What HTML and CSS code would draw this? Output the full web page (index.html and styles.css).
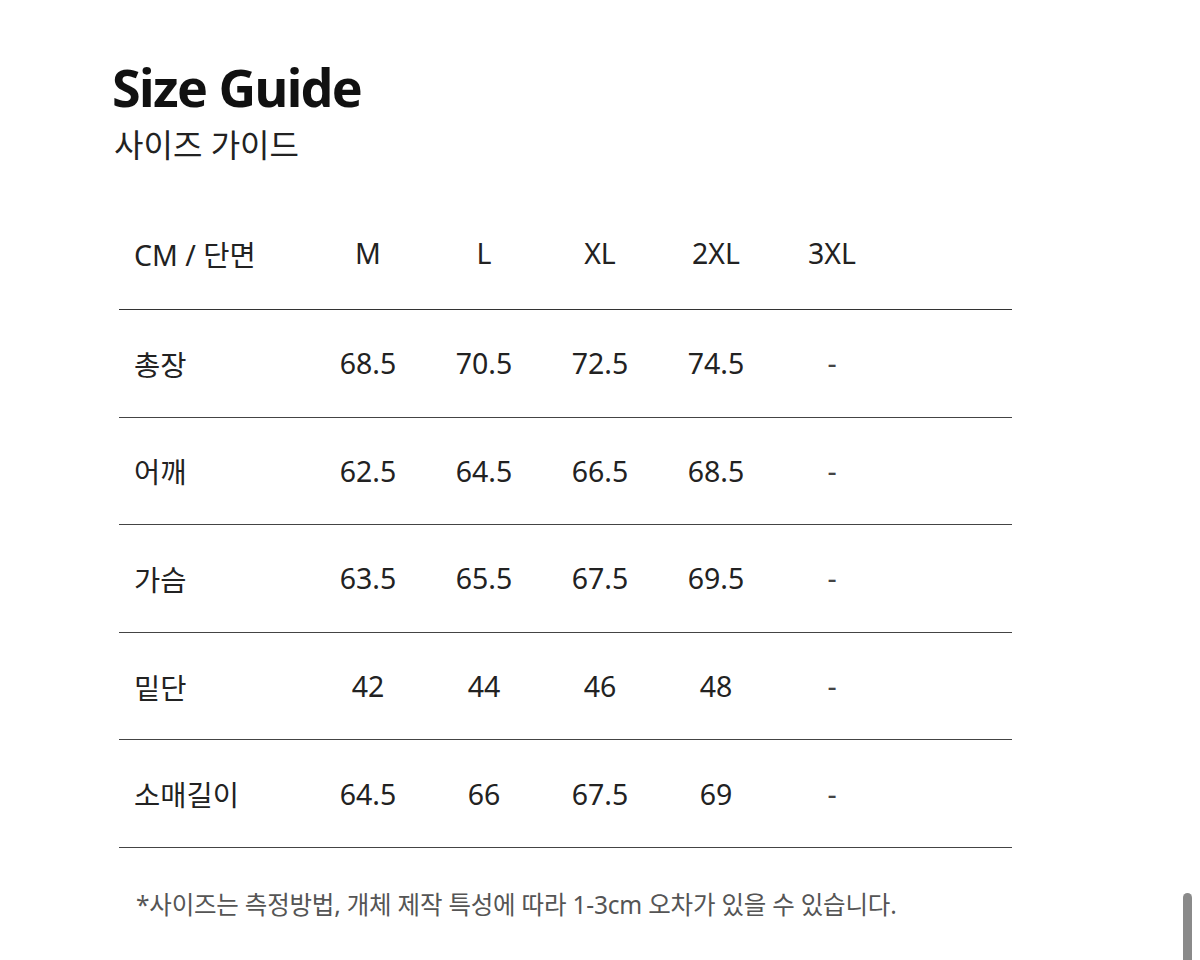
FILE: index.html
```html
<!DOCTYPE html>
<html lang="ko">
<head>
<meta charset="utf-8">
<title>Size Guide</title>
<link rel="stylesheet" href="styles.css">
</head>
<body>
<main class="page">
  <header class="heading">
    <h1 class="title">Size Guide</h1>
    <p class="subtitle">사이즈 가이드</p>
  </header>
  <table class="size-table">
    <colgroup>
      <col class="col-label">
      <col class="col-size"><col class="col-size"><col class="col-size"><col class="col-size"><col class="col-size">
      <col>
    </colgroup>
    <thead>
      <tr><th class="label">CM / 단면</th><th>M</th><th>L</th><th>XL</th><th>2XL</th><th>3XL</th><th></th></tr>
    </thead>
    <tbody>
      <tr><td class="label">총장</td><td>68.5</td><td>70.5</td><td>72.5</td><td>74.5</td><td class="dash">-</td><td></td></tr>
      <tr><td class="label">어깨</td><td>62.5</td><td>64.5</td><td>66.5</td><td>68.5</td><td class="dash">-</td><td></td></tr>
      <tr><td class="label">가슴</td><td>63.5</td><td>65.5</td><td>67.5</td><td>69.5</td><td class="dash">-</td><td></td></tr>
      <tr><td class="label">밑단</td><td>42</td><td>44</td><td>46</td><td>48</td><td class="dash">-</td><td></td></tr>
      <tr><td class="label">소매길이</td><td>64.5</td><td>66</td><td>67.5</td><td>69</td><td class="dash">-</td><td></td></tr>
    </tbody>
  </table>
  <p class="note">*사이즈는 측정방법, 개체 제작 특성에 따라 1-3cm 오차가 있을 수 있습니다.</p>
</main>
<div class="scrollbar"></div>
</body>
</html>
```
FILE: styles.css
```css
html, body {
  margin: 0;
  padding: 0;
  background: #ffffff;
}
body {
  width: 1200px;
  height: 960px;
  overflow: hidden;
  position: relative;
  font-family: "Noto Sans", "Noto Sans CJK KR", sans-serif;
  color: #222222;
}
.page {
  padding: 52px 0 0 112px;
}
.heading {
  display: flex;
  flex-direction: column;
}
.title {
  margin: 0;
  font-size: 52px;
  line-height: 70px;
  font-weight: 700;
  letter-spacing: -1.6px;
  color: #111111;
}
.subtitle {
  margin: 0 0 0 2px;
  font-size: 32px;
  line-height: 46px;
  font-weight: 400;
  color: #222222;
  letter-spacing: 0;
}
.size-table {
  margin: 29px 0 0 7px;
  width: 893px;
  border-collapse: collapse;
  table-layout: fixed;
}
.col-label { width: 191px; }
.col-size { width: 116px; }
.size-table th,
.size-table td {
  font-weight: 400;
  font-size: 28.5px;
  text-align: center;
  padding: 0;
  color: #222222;
  letter-spacing: 0;
}
.size-table thead th {
  height: 112px;
  border-bottom: 1px solid #333333;
}
.size-table tbody td {
  height: 106.6px;
  border-bottom: 1px solid #444444;
}
.size-table .label {
  text-align: left;
  padding-left: 15px;
}
.size-table .dash {
  color: #444444;
}
.note {
  margin: 41px 0 0 24px;
  font-size: 24.5px;
  line-height: 32px;
  color: #555555;
  letter-spacing: -0.2px;
}
.scrollbar {
  position: absolute;
  left: 1183px;
  top: 893px;
  width: 9px;
  height: 80px;
  border-radius: 5px;
  background: #8a8a8a;
}
```
